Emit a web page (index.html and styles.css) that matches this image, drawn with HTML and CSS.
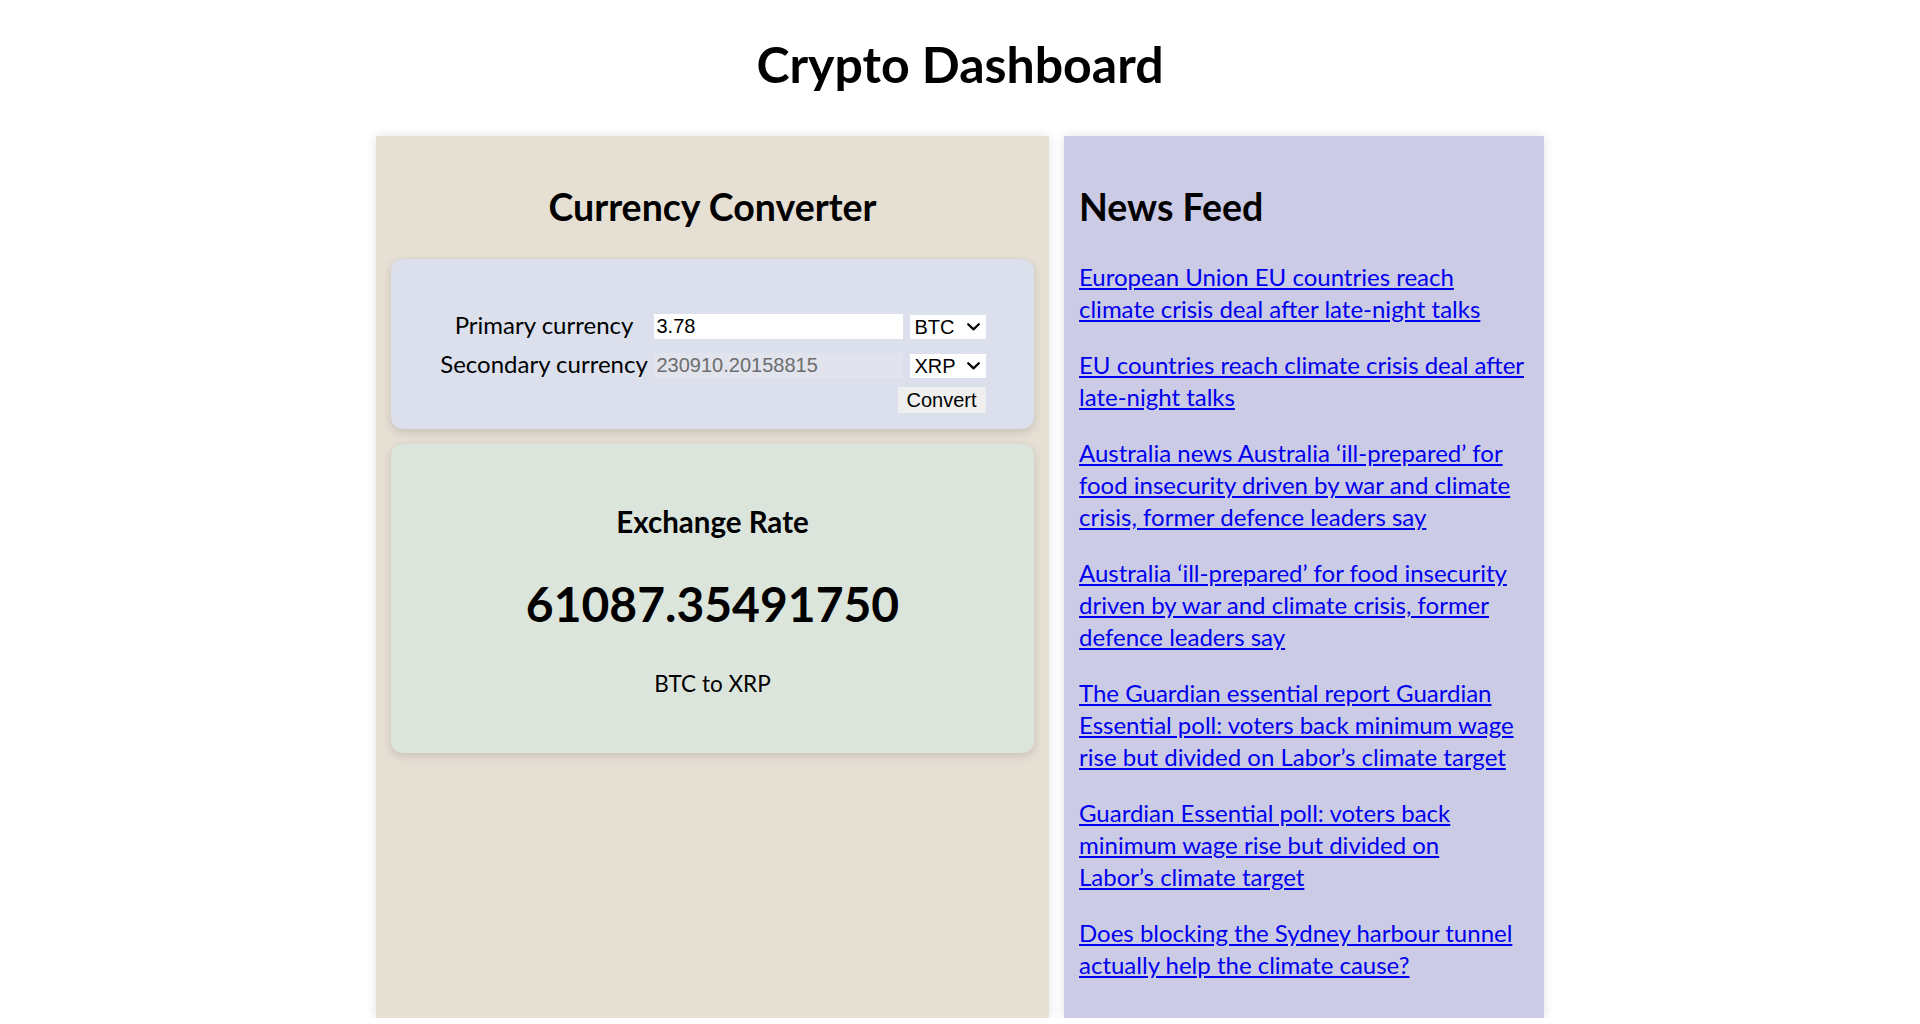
FILE: index.html
```html
<!DOCTYPE html>
<html lang="en">
<head>
<meta charset="utf-8">
<title>Crypto Dashboard</title>
<link rel="stylesheet" href="styles.css">
</head>
<body>
<h1 class="page-title">Crypto Dashboard</h1>
<main class="dashboard">
  <section class="panel converter-panel">
    <h2 class="panel-title centered">Currency Converter</h2>
    <div class="card converter-card">
      <div class="converter-grid">
        <label class="field-label" for="primary">Primary currency</label>
        <input class="amount" id="primary" type="text" value="3.78">
        <div class="select-wrap">
          <select class="currency"><option>BTC</option><option>ETH</option><option>XRP</option></select>
          <svg class="chevron" viewBox="0 0 13 8" aria-hidden="true"><path d="M1.2 1.2 L6.5 6.4 L11.8 1.2" /></svg>
        </div>
        <label class="field-label" for="secondary">Secondary currency</label>
        <input class="amount amount-result" id="secondary" type="text" value="230910.20158815" readonly>
        <div class="select-wrap">
          <select class="currency"><option>XRP</option><option>BTC</option><option>ETH</option></select>
          <svg class="chevron" viewBox="0 0 13 8" aria-hidden="true"><path d="M1.2 1.2 L6.5 6.4 L11.8 1.2" /></svg>
        </div>
        <button class="convert" type="button">Convert</button>
      </div>
    </div>
    <div class="card rate-card">
      <h3 class="rate-title">Exchange Rate</h3>
      <div class="rate-value">61087.35491750</div>
      <p class="rate-pair">BTC to XRP</p>
    </div>
  </section>
  <section class="panel news-panel">
    <h2 class="panel-title">News Feed</h2>
    <p class="news-item"><a href="#">European Union EU countries reach climate crisis deal after late-night talks</a></p>
    <p class="news-item"><a href="#">EU countries reach climate crisis deal after late-night talks</a></p>
    <p class="news-item"><a href="#">Australia news Australia ‘ill-prepared’ for food insecurity driven by war and climate crisis, former defence leaders say</a></p>
    <p class="news-item"><a href="#">Australia ‘ill-prepared’ for food insecurity driven by war and climate crisis, former defence leaders say</a></p>
    <p class="news-item"><a href="#">The Guardian essential report Guardian Essential poll: voters back minimum wage rise but divided on Labor’s climate target</a></p>
    <p class="news-item"><a href="#">Guardian Essential poll: voters back minimum wage rise but divided on Labor’s&nbsp;climate target</a></p>
    <p class="news-item"><a href="#">Does blocking the Sydney harbour tunnel actually help the climate cause?</a></p>
  </section>
</main>
</body>
</html>
```

FILE: styles.css
```css
html, body {
  margin: 0;
  padding: 0;
  background: #ffffff;
}

body {
  font-family: Lato, "Open Sans", "Noto Sans", sans-serif;
  color: #000;
}

.page-title {
  margin: 0;
  padding-top: 32px;
  font-size: 50px;
  line-height: 64px;
  font-weight: 700;
  text-align: center;
}

.dashboard {
  display: grid;
  grid-template-columns: 673px 480px;
  column-gap: 15px;
  justify-content: center;
  margin-top: 40px;
}

.panel {
  box-shadow: 0 0 10px rgba(0, 0, 0, 0.12);
}

.converter-panel {
  background: #e6dfd4;
  padding: 17px 15px 15px;
}

.news-panel {
  background: #cccbe6;
  padding: 17px 17px 13px 15px;
}

.panel-title {
  margin: 30px 0 28px;
  font-size: 37.5px;
  line-height: 48px;
  font-weight: 700;
}

.news-panel .panel-title {
  margin-bottom: 30px;
}

.centered {
  text-align: center;
}

.card {
  border-radius: 12px;
  box-shadow: 0 3px 10px rgba(0, 0, 0, 0.14);
}

.converter-card {
  background: #dbe0ec;
  padding: 50px 0 16px;
}

.converter-grid {
  display: grid;
  grid-template-columns: 209px 249px 78px;
  grid-template-rows: 35px 35px auto;
  column-gap: 5px;
  row-gap: 4px;
  justify-content: center;
  align-items: center;
}

.field-label {
  padding-bottom: 4px;
  font-size: 24px;
  line-height: 32px;
  text-align: center;
  white-space: nowrap;
}

.amount {
  box-sizing: border-box;
  width: 249px;
  height: 25px;
  border: none;
  outline: none;
  padding: 0 3px;
  margin: 0;
  background: #ffffff;
  color: #000;
  font-family: "Liberation Sans", Arial, sans-serif;
  font-size: 20px;
}

.amount-result {
  background: rgba(239, 239, 239, 0.3);
  color: #6d6d6d;
}

.select-wrap {
  justify-self: end;
  display: flex;
  align-items: center;
  box-sizing: border-box;
  width: 76px;
  height: 24px;
  background: #ffffff;
}

.currency {
  -webkit-appearance: none;
  appearance: none;
  box-sizing: border-box;
  width: 52px;
  height: 24px;
  border: none;
  border-radius: 0;
  outline: none;
  margin: 0;
  padding: 0 0 0 5px;
  background: transparent;
  color: #000;
  font-family: "Liberation Sans", Arial, sans-serif;
  font-size: 20px;
}

.chevron {
  width: 13px;
  height: 8px;
  margin-left: auto;
  margin-right: 6px;
  fill: none;
  stroke: #000;
  stroke-width: 2.2;
  stroke-linecap: round;
  stroke-linejoin: round;
}

.convert {
  grid-column: 1 / -1;
  justify-self: end;
  box-sizing: border-box;
  width: 88px;
  height: 26px;
  border: none;
  border-radius: 0;
  padding: 0;
  background: #efefef;
  color: #000;
  font-family: "Liberation Sans", Arial, sans-serif;
  font-size: 20px;
}

.rate-card {
  margin-top: 15px;
  background: #dce5dc;
  padding: 31px 0 29px;
  text-align: center;
}

.rate-title {
  margin: 28px 0 32px;
  font-size: 29.5px;
  line-height: 37px;
  font-weight: 700;
}

.rate-value {
  margin: 0 0 32px;
  font-size: 48px;
  line-height: 64px;
  font-weight: 700;
}

.rate-pair {
  margin: 0 0 24px;
  font-size: 22.5px;
  line-height: 32px;
}

.news-item {
  margin: 24px 0;
  font-size: 24px;
  line-height: 32px;
}

.news-item a {
  color: #0000ee;
  text-decoration: underline;
}
```
